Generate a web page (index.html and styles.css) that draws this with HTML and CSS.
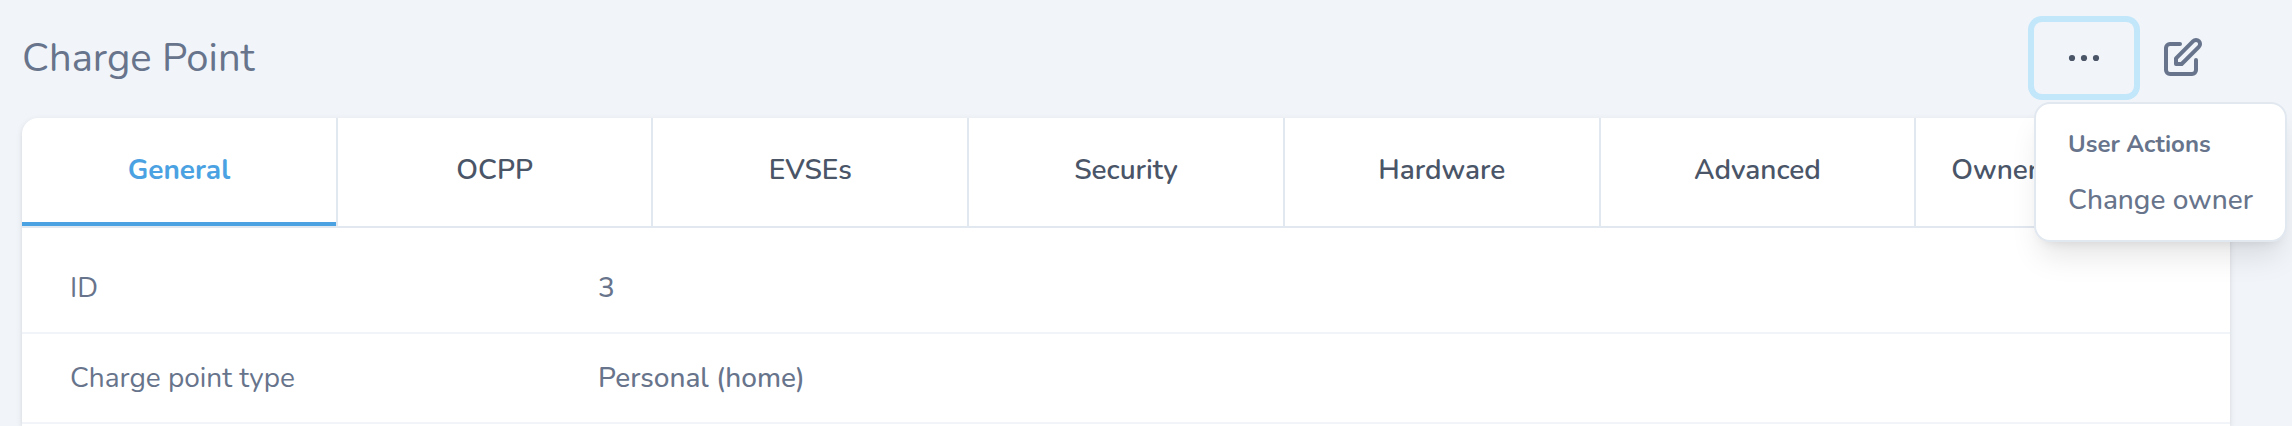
FILE: index.html
```html
<!DOCTYPE html>
<html lang="en">
<head>
    <meta charset="utf-8">
    <title>Charge Point</title>
    <link rel="stylesheet" href="styles.css">
</head>
<body>
    <div class="header">
        <h1>Charge Point</h1>
        <div class="actions">
            <div class="dropdown">
                <button class="more-btn" aria-label="Actions">
                    <svg width="32" height="8" viewBox="0 0 32 8" fill="currentColor">
                        <circle cx="4" cy="4" r="3.1"/>
                        <circle cx="16" cy="4" r="3.1"/>
                        <circle cx="28" cy="4" r="3.1"/>
                    </svg>
                </button>
                <div class="menu">
                    <div class="menu-title">User Actions</div>
                    <a class="menu-item">Change owner</a>
                </div>
            </div>
            <a class="edit-btn" aria-label="Edit">
                <svg width="48" height="48" viewBox="0 0 24 24" fill="none" stroke="currentColor" stroke-width="2" stroke-linecap="round" stroke-linejoin="round">
                    <path d="M11 5H6a2 2 0 00-2 2v11a2 2 0 002 2h11a2 2 0 002-2v-5m-1.414-9.414a2 2 0 112.828 2.828L11.828 15H9v-2.828l8.586-8.586z"/>
                </svg>
            </a>
        </div>
    </div>

    <div class="card">
        <div class="tabs">
            <a class="tab active">General</a>
            <a class="tab">OCPP</a>
            <a class="tab">EVSEs</a>
            <a class="tab">Security</a>
            <a class="tab">Hardware</a>
            <a class="tab">Advanced</a>
            <a class="tab tab-last">Owner</a>
        </div>
        <div class="fields">
            <div class="row">
                <div class="label">ID</div>
                <div class="value">3</div>
            </div>
            <div class="row">
                <div class="label">Charge point type</div>
                <div class="value">Personal (home)</div>
            </div>
        </div>
    </div>
</body>
</html>
```

FILE: styles.css
```css
body {
    margin: 0;
    padding: 22px 62px 0 22px;
    height: 426px;
    box-sizing: border-box;
    background-color: #f1f5fa;
    color: #67748b;
    font-family: Nunito, Lato, sans-serif;
    font-size: 28px;
    line-height: 36px;
}

.header {
    display: flex;
    justify-content: space-between;
    height: 96px;
}

h1 {
    margin: 0;
    font-size: 40px;
    font-weight: 400;
    line-height: 72px;
}

.actions {
    display: flex;
    align-items: flex-start;
}

.dropdown {
    position: relative;
}

.more-btn {
    display: flex;
    align-items: center;
    justify-content: center;
    width: 100px;
    height: 72px;
    padding: 0;
    border: 0;
    border-radius: 8px;
    background: none;
    color: #4a5568;
    box-shadow: 0 0 0 6px #c2e6fa;
}

.menu {
    position: absolute;
    top: 80px;
    left: 0;
    z-index: 10;
    box-sizing: border-box;
    width: 253px;
    height: 140px;
    padding: 20px 0 0 32px;
    border: 2px solid #e2e8f0;
    border-radius: 16px;
    background-color: #fff;
    white-space: nowrap;
    box-shadow: 0 20px 30px -6px rgba(0, 0, 0, 0.1), 0 8px 12px -8px rgba(0, 0, 0, 0.1);
}

.menu-title {
    font-size: 24px;
    font-weight: 700;
    line-height: 40px;
}

.menu-item {
    display: block;
    margin-top: 18px;
    font-weight: 500;
}

.edit-btn {
    display: flex;
    margin: 12px 24px 0;
}

.card {
    height: 308px;
    border-radius: 16px 16px 0 0;
    background-color: #fff;
    box-shadow: 0 2px 6px rgba(0, 0, 0, 0.1), 0 2px 4px -2px rgba(0, 0, 0, 0.1);
}

.tabs {
    display: flex;
    height: 108px;
    border-bottom: 2px solid #e2e8f0;
}

.tab {
    flex: 1 1 0;
    border-right: 2px solid #e2e8f0;
    color: #4a5568;
    font-weight: 600;
    line-height: 104px;
    text-align: center;
    white-space: nowrap;
}

.tab.active {
    color: #4ba2e2;
    font-weight: 700;
    box-shadow: inset 0 -4px #4ba2e2;
}

.tab-last {
    border-right: 0;
    text-align: left;
    text-indent: 35px;
}

.fields {
    padding-top: 16px;
}

.row {
    display: flex;
    height: 88px;
    align-items: center;
    padding: 0 48px;
    border-bottom: 2px solid #f1f5f9;
}

.label {
    width: 528px;
}

.value {
    font-weight: 500;
}
```
